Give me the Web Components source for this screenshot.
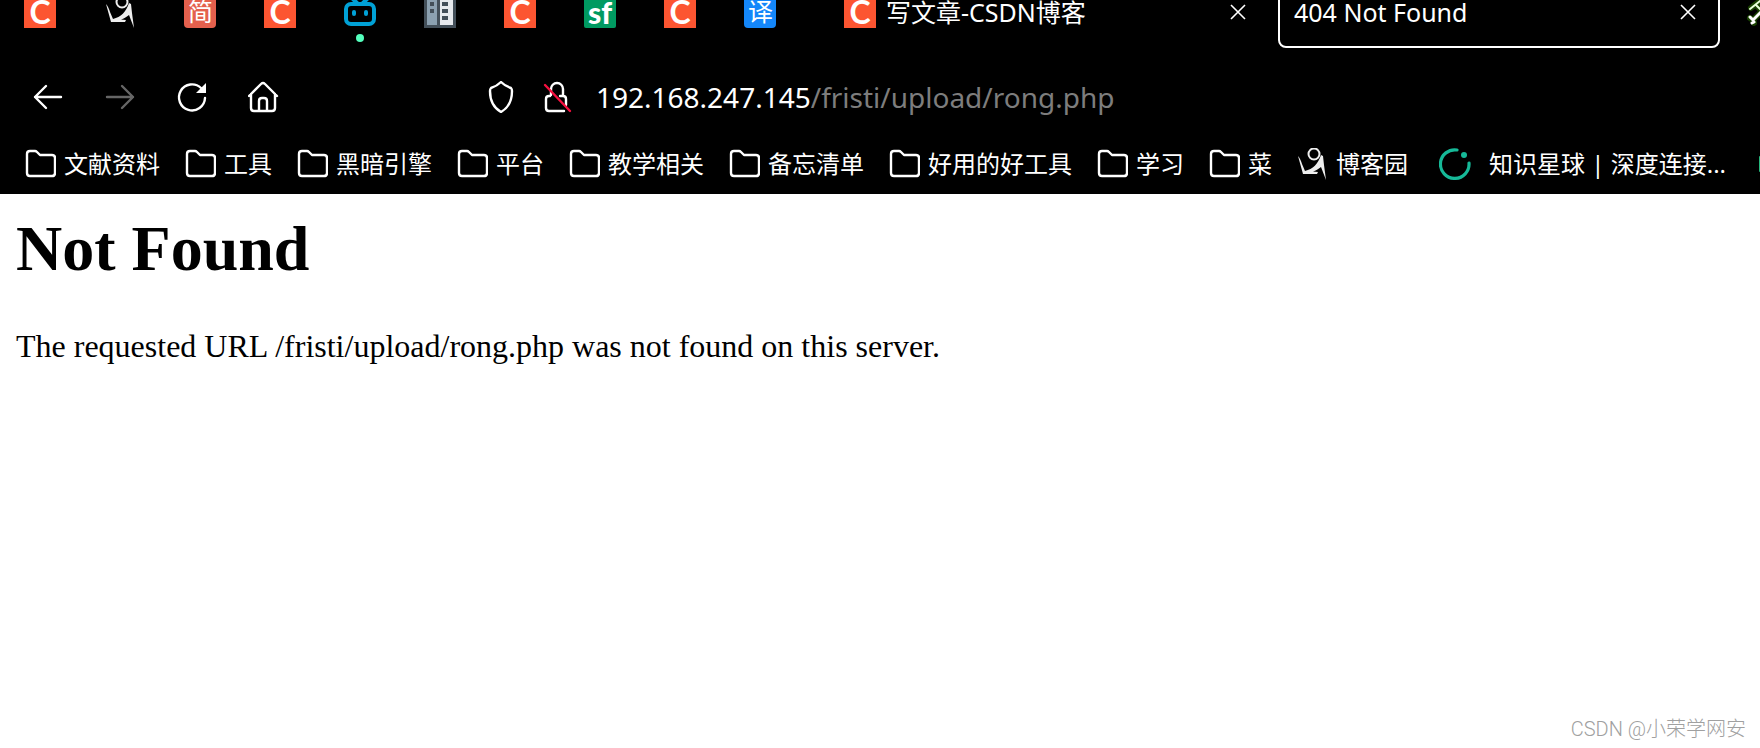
<!DOCTYPE html>
<html lang="zh-CN">
<head>
<meta charset="utf-8">
<meta name="viewport" content="width=device-width, initial-scale=1">
<title>404 Not Found</title>
<style>
  body {
    background: #fff;
    font-family: "Noto Sans", "Noto Sans CJK SC", sans-serif;
    margin: 0;
  }
</style>
</head>
<body>
<browser-window>
  <tab-strip slot="chrome">
    <pinned-tab><site-icon name="csdn"></site-icon></pinned-tab>
    <pinned-tab><site-icon name="cnblogs"></site-icon></pinned-tab>
    <pinned-tab><site-icon name="jianshu"></site-icon></pinned-tab>
    <pinned-tab><site-icon name="csdn"></site-icon></pinned-tab>
    <pinned-tab attention><site-icon name="bilibili"></site-icon></pinned-tab>
    <pinned-tab><site-icon name="building"></site-icon></pinned-tab>
    <pinned-tab><site-icon name="csdn"></site-icon></pinned-tab>
    <pinned-tab><site-icon name="segmentfault"></site-icon></pinned-tab>
    <pinned-tab><site-icon name="csdn"></site-icon></pinned-tab>
    <pinned-tab><site-icon name="translate"></site-icon></pinned-tab>
    <page-tab class="first"><site-icon slot="icon" name="csdn"></site-icon>写文章-CSDN博客</page-tab>
    <page-tab selected>404 Not Found</page-tab>
    <page-tab><site-icon slot="icon" name="tools"></site-icon></page-tab>
  </tab-strip>
  <nav-bar slot="chrome" host="192.168.247.145" path="/fristi/upload/rong.php"></nav-bar>
  <bookmark-bar slot="chrome">
    <bookmark-item icon="folder">文献资料</bookmark-item>
    <bookmark-item icon="folder">工具</bookmark-item>
    <bookmark-item icon="folder">黑暗引擎</bookmark-item>
    <bookmark-item icon="folder">平台</bookmark-item>
    <bookmark-item icon="folder">教学相关</bookmark-item>
    <bookmark-item icon="folder">备忘清单</bookmark-item>
    <bookmark-item icon="folder">好用的好工具</bookmark-item>
    <bookmark-item icon="folder">学习</bookmark-item>
    <bookmark-item icon="folder">菜</bookmark-item>
    <bookmark-item icon="cnblogs">博客园</bookmark-item>
    <bookmark-item icon="planet" class="wide">知识星球 | 深度连接...</bookmark-item>
    <bookmark-item icon="sheet" class="wide"></bookmark-item>
  </bookmark-bar>
  <error-page>
    <span slot="title">Not Found</span>
    The requested URL /fristi/upload/rong.php was not found on this server.
  </error-page>
  <water-mark>CSDN @小荣学网安</water-mark>
</browser-window>

<script>
// site-icon: 32px favicons, either a drawing or a letter on a tile
const drawings = {
  cnblogs: `<path fill="#eee" d="M2 8C4 10 5 13 6 16L9 23C17 21 22 16 25 7L27 8L28 17L30 32L25 19C22 21 20 23 17 23.500L22 24L21 26L7 26Z"/>
    <circle cx="18" cy="6" r="5.500" fill="none" stroke="#eee" stroke-width="2"/>`,
  bilibili: `<g fill="none" stroke="#00a1d6" stroke-width="4" stroke-linecap="round"><rect x="2" y="8" width="28" height="20" rx="5"/><path d="M9 3l4 4M23 3l-4 4"/></g>
    <rect x="8" y="14" width="4" height="6" rx="2" fill="#00a1d6"/><rect x="20" y="14" width="4" height="6" rx="2" fill="#00a1d6"/>`,
  building: `<path fill="#434f59" d="M0 0h32v32H0z"/><path fill="#8ca1b1" d="M3 3h10v26H3z"/><path fill="#e7eaee" d="M16 3h13v26H16z"/>
    <path fill="#434f59" d="M6 6h4v4H6zM6 13h4v4H6zM18 6h6v4h-6zM18 13h6v4h-6zM18 20h6v4h-6z"/>`,
  tools: `<g fill="none" stroke-linecap="round"><path stroke="#245c00" stroke-width="6" opacity=".7" d="M7 12L16 5M12 9L28 25M17 16L9 24M6 22l3 2 1 3"/>
    <path stroke="#e8ffd8" stroke-width="2" d="M6 13L16 5M12 9L28 25"/><path stroke="#fff" stroke-width="3" d="M17 16L9 24M6 21l3 3M10 26l-2 1"/></g>`,
  folder: `<path fill="none" stroke="#fff" stroke-width="2.4" stroke-linejoin="round" d="M6 3h5q1 0 2 1l3 3h12q3 0 3 3v15q0 3-3 3H6q-3 0-3-3V6q0-3 3-3z"/>`,
  planet: `<path fill="none" stroke="#16b998" stroke-width="3.200" stroke-linecap="round" d="M18 2A14.300 14.300 0 1 0 30 15"/><circle cx="25" cy="7" r="3" fill="#16b998"/>`,
  sheet: `<rect x="2" y="8" width="28" height="16" rx="1" fill="#25b67c"/>`
};
const letters = { csdn: 'C', jianshu: '简', segmentfault: 'sf', translate: '译' };

class SiteIcon extends HTMLElement {
  connectedCallback() {
    const name = this.getAttribute('name');
    const body = drawings[name]
      ? `<svg viewBox="0 0 32 32" aria-hidden="true">${drawings[name]}</svg>`
      : `<span class="${name}">${letters[name]}</span>`;
    this.attachShadow({mode: 'open'}).innerHTML = `
      <style>
        :host {
          display: block;
          flex: none;
          height: 32px;
          width: 32px;
        }

        svg {
          display: block;
        }

        span {
          color: white;
          display: block;
          font-size: 25px;
          height: 32px;
          line-height: 32px;
          text-align: center;
        }

        .csdn {
          background: #fc5531;
          font-family: Lato, sans-serif;
          font-size: 32px;
          font-weight: 700;
        }

        .jianshu {
          background: #e4604d;
          border-radius: 4px;
          font-weight: 500;
        }

        .segmentfault {
          background: #009a61;
          border-radius: 2px;
          font-family: Lato, sans-serif;
          font-size: 30px;
          font-weight: 900;
        }

        .translate {
          background: #1487fa;
          border-radius: 4px;
          font-weight: 500;
        }
      </style>
      ${body}
    `;
  }
}
customElements.define('site-icon', SiteIcon);

// the strip shows only the lower part of its tabs
class TabStrip extends HTMLElement {
  constructor() {
    super();
    this.attachShadow({mode: 'open'}).innerHTML = `
      <style>
        :host {
          align-items: flex-end;
          box-sizing: border-box;
          display: flex;
          gap: 8px;
          height: 60px;
          overflow: hidden;
          padding: 0 0 12px 4px;
        }

        ::slotted(.first) {
          margin-left: 24px;
        }
      </style>
      <slot></slot>
    `;
  }
}
customElements.define('tab-strip', TabStrip);

class PinnedTab extends HTMLElement {
  constructor() {
    super();
    this.attachShadow({mode: 'open'}).innerHTML = `
      <style>
        :host {
          display: block;
          flex: none;
          position: relative;
        }

        button {
          background: none;
          border: none;
          display: block;
          height: 72px;
          padding: 20px;
        }

        :host([attention])::after {
          background: #54ffbd;
          border-radius: 50%;
          bottom: 6px;
          content: "";
          height: 8px;
          left: 32px;
          position: absolute;
          width: 8px;
        }
      </style>
      <button type="button"><slot></slot></button>
    `;
  }
}
customElements.define('pinned-tab', PinnedTab);

class PageTab extends HTMLElement {
  constructor() {
    super();
    this.attachShadow({mode: 'open'}).innerHTML = `
      <style>
        :host {
          align-items: center;
          border: 2px solid transparent;
          border-radius: 8px;
          box-sizing: border-box;
          display: flex;
          flex: none;
          font-size: 25px;
          height: 72px;
          padding: 0 14px;
          width: 442px;
        }

        :host([selected]) {
          border-color: white;
        }

        button {
          background: none;
          border: none;
          color: inherit;
          font: inherit;
          padding: 0;
        }

        .title {
          align-items: center;
          display: flex;
          flex: 1;
          gap: 10px;
          white-space: nowrap;
        }

        .close {
          height: 32px;
          width: 32px;
        }

        svg {
          display: block;
        }
      </style>
      <button type="button" class="title"><slot name="icon"></slot><span><slot></slot></span></button>
      <button type="button" class="close" aria-label="×">
        <svg viewBox="0 0 32 32"><path d="M9 9l14 14M23 9L9 23" fill="none" stroke="#fff" stroke-width="1.600"/></svg>
      </button>
    `;
  }
}
customElements.define('page-tab', PageTab);

class NavBar extends HTMLElement {
  connectedCallback() {
    this.attachShadow({mode: 'open'}).innerHTML = `
      <style>
        :host {
          align-items: center;
          display: flex;
          gap: 40px;
          height: 74px;
          padding: 0 32px;
        }

        button {
          background: none;
          border: none;
          flex: none;
          height: 32px;
          padding: 0;
          width: 32px;
        }

        svg {
          display: block;
          fill: none;
          stroke: white;
          stroke-linecap: round;
          stroke-linejoin: round;
          stroke-width: 2.4;
        }

        button:disabled {
          opacity: 0.4;
        }

        .address {
          align-items: center;
          display: flex;
          flex: 1;
          gap: 24px;
          margin-left: 164px;
        }

        label {
          display: flex;
          flex: 1;
          font-size: 28px;
          line-height: 40px;
        }

        input {
          background: none;
          border: none;
          color: #7d7d7d;
          flex: 1;
          font: inherit;
          min-width: 0;
          outline: none;
          padding: 0;
        }
      </style>
      <button type="button"><svg viewBox="0 0 32 32"><path d="M29 16H3M14 5L3 16l11 11"/></svg></button>
      <button type="button" disabled><svg viewBox="0 0 32 32"><path d="M3 16h26M18 5l11 11-11 11"/></svg></button>
      <button type="button"><svg viewBox="0 0 32 32"><path d="M29 17A13 13 0 1 1 25 7"/><path fill="#fff" stroke="none" d="M30 2v10H20z"/></svg></button>
      <button type="button"><svg viewBox="0 0 32 32"><path d="M1 15L13 3q2-2 4 0l12 12M3 13v14q0 3 3 3h18q3 0 3-3V13M11 30V20q0-3 3-3h2q3 0 3 3v10"/></svg></button>
      <div class="address">
        <button type="button"><svg viewBox="0 0 32 32"><path d="M17 1C21 5 24 6 27 7Q28 8 28 10C28 20 24 27 17 31C10 27 6 20 6 10Q6 8 7 7C10 6 13 5 17 1z"/></svg></button>
        <button type="button"><svg viewBox="0 0 32 32"><path d="M11 14V8a6 6 0 0 1 12 0v7M10 15H9q-3 0-3 3v9q0 3 3 3h15M20 15h3q3 0 3 3v6"/><path stroke="#f5103f" d="M5 4l25 26"/></svg></button>
        <label><span>${this.getAttribute('host')}</span><input type="text" value="${this.getAttribute('path')}" spellcheck="false"></label>
      </div>
    `;
  }
}
customElements.define('nav-bar', NavBar);

class BookmarkBar extends HTMLElement {
  constructor() {
    super();
    this.attachShadow({mode: 'open'}).innerHTML = `
      <style>
        :host {
          align-items: center;
          display: flex;
          gap: 24px;
          height: 60px;
          overflow: hidden;
          padding-left: 24px;
        }

        ::slotted(.wide) {
          --icon-gap: 18px;
          margin-left: 7px;
        }
      </style>
      <slot></slot>
    `;
  }
}
customElements.define('bookmark-bar', BookmarkBar);

class BookmarkItem extends HTMLElement {
  connectedCallback() {
    this.attachShadow({mode: 'open'}).innerHTML = `
      <style>
        :host {
          display: block;
          flex: none;
        }

        a {
          align-items: center;
          color: inherit;
          display: flex;
          gap: var(--icon-gap, 8px);
          text-decoration: none;
          white-space: nowrap;
        }
      </style>
      <a href="#"><site-icon name="${this.getAttribute('icon')}"></site-icon><span><slot></slot></span></a>
    `;
  }
}
customElements.define('bookmark-item', BookmarkItem);

class ErrorPage extends HTMLElement {
  constructor() {
    super();
    this.attachShadow({mode: 'open'}).innerHTML = `
      <style>
        :host {
          color: black;
          display: block;
          font-family: "Liberation Serif", serif;
          font-size: 32px;
          padding: 18px 16px;
        }

        h1 {
          font-size: 64px;
          line-height: 74px;
          margin: 0 0 42px;
        }

        p {
          line-height: 36px;
          margin: 0;
        }
      </style>
      <h1><slot name="title"></slot></h1>
      <p><slot></slot></p>
    `;
  }
}
customElements.define('error-page', ErrorPage);

class WaterMark extends HTMLElement {
  constructor() {
    super();
    this.attachShadow({mode: 'open'}).innerHTML = `
      <style>
        :host {
          align-self: flex-end;
          color: #a0a0a0;
          display: block;
          font-family: Roboto, "Noto Sans CJK SC", sans-serif;
          font-size: 20px;
          font-weight: 300;
          line-height: 24px;
          margin-top: auto;
          padding: 0 14px 7px;
        }
      </style>
      <slot></slot>
    `;
  }
}
customElements.define('water-mark', WaterMark);

class BrowserWindow extends HTMLElement {
  constructor() {
    super();
    this.attachShadow({mode: 'open'}).innerHTML = `
      <style>
        :host {
          display: flex;
          flex-direction: column;
          min-height: 100vh;
        }

        header {
          background: black;
          color: white;
          font-size: 24px;
          line-height: 32px;
        }
      </style>
      <header><slot name="chrome"></slot></header>
      <slot></slot>
    `;
  }
}
customElements.define('browser-window', BrowserWindow);
</script>
</body>
</html>
